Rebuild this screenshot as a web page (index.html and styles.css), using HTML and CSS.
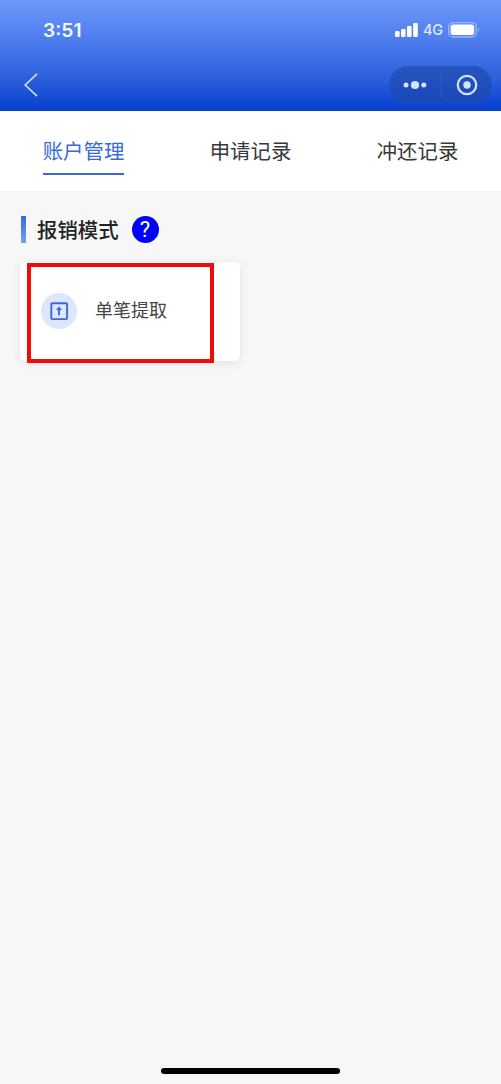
FILE: index.html
```
<!DOCTYPE html>
<html lang="zh-CN">
<head>
<meta charset="utf-8">
<title>账户管理</title>
<link rel="stylesheet" href="styles.css">
</head>
<body>
<div class="screen">
  <header class="header">
    <div class="status">
      <span class="time">3:51</span>
      <div class="indicators">
        <svg class="signal" width="23" height="14" viewBox="0 0 23 14" fill="#fff"><rect y="8" width="4.6" height="6" rx="1.2"/><rect x="6" y="6" width="4.6" height="8" rx="1.2"/><rect x="12" y="3" width="4.6" height="11" rx="1.2"/><rect x="18.2" width="4.6" height="14" rx="1.2"/></svg>
        <span class="network">4G</span>
        <svg width="33" height="16" viewBox="0 0 33 16"><rect x=".7" y=".7" width="27.6" height="14.2" rx="4.2" fill="none" stroke="#a9c4fb" stroke-width="1.1"/><rect x="2.6" y="2.6" width="23.6" height="10.4" rx="2.6" fill="#fff"/><path d="M30 5.6q1.8 2.2 0 4.4z" fill="#a9c4fb"/></svg>
      </div>
    </div>
    <nav class="navbar">
      <svg width="14" height="24" viewBox="0 0 14 24" fill="none" stroke="#c9e0ff" stroke-width="1.7"><path d="M13 .8 1.2 12 13 23.2"/></svg>
      <div class="capsule">
        <svg width="24" height="10" viewBox="0 0 24 10" fill="#d3e5fc"><circle cx="3" cy="5" r="2.5"/><circle cx="12" cy="5" r="4.1"/><circle cx="20.8" cy="5" r="2.5"/></svg>
        <span class="divider"></span>
        <svg width="22" height="22" viewBox="0 0 22 22"><circle cx="11" cy="11" r="9.2" fill="none" stroke="#cfe4fd" stroke-width="2.3"/><circle cx="11" cy="11" r="3.7" fill="#cfe4fd"/></svg>
      </div>
    </nav>
  </header>
  <div class="tabs">
    <div class="tab active"><span>账户管理</span></div>
    <div class="tab"><span>申请记录</span></div>
    <div class="tab"><span>冲还记录</span></div>
  </div>
  <main class="content">
    <div class="heading">
      <span class="marker"></span>
      <h1 class="title">报销模式</h1>
      <span class="help">?</span>
    </div>
    <div class="card">
      <svg width="36" height="36" viewBox="0 0 36 36"><circle cx="18" cy="18" r="18" fill="#dce6fd"/><rect x="10.3" y="10.3" width="15.8" height="15.8" rx="1" fill="none" stroke="#3f68d6" stroke-width="1.9"/><path d="M18 22.2V15" fill="none" stroke="#3f68d6" stroke-width="1.9"/><path d="m15 17 3-3.4 3 3.4z" fill="#3f68d6"/></svg>
      <span class="label">单笔提取</span>
      <span class="highlight"></span>
    </div>
  </main>
  <div class="home"></div>
</div>
</body>
</html>
```
FILE: styles.css
```
* { box-sizing: border-box; }
body { margin: 0; font-family: "Noto Sans CJK SC", sans-serif; }
svg { display: block; flex: none; }
.screen {
  width: 501px;
  height: 1084px;
  display: flex;
  flex-direction: column;
  background: #f7f7f7;
}
.header {
  height: 111px;
  background: linear-gradient(#6f98fb 0, #4c7bed 38%, #2e60dc 70%, #063fd0 100%);
}
.status {
  height: 60px;
  padding: 0 20px 0 43px;
  display: flex;
  align-items: center;
  justify-content: space-between;
}
.time {
  font: 600 19.2px/24px Inter, sans-serif;
  color: #f4fbff;
}
.indicators { display: flex; align-items: center; }
.network {
  width: 20px;
  margin: 0 5px 0 5px;
  font: 500 14.5px/18px Inter, sans-serif;
  letter-spacing: -0.2px;
  color: #dfedff;
}
.navbar {
  height: 49px;
  padding: 0 9px 0 24px;
  display: flex;
  align-items: center;
  justify-content: space-between;
}
.capsule {
  width: 103px;
  height: 38px;
  padding: 0 14px;
  display: flex;
  align-items: center;
  justify-content: space-between;
  border-radius: 19px;
  background: rgba(28, 72, 168, .6);
}
.divider { width: 1px; height: 25px; background: #315bbd; }
.tabs {
  height: 80px;
  display: grid;
  grid-template-columns: repeat(3, 1fr);
  background: #fff;
}
.tab {
  display: flex;
  justify-content: center;
  align-items: flex-start;
  font-size: 20.4px;
  line-height: 30px;
  color: #383838;
}
.tab span { height: 64px; padding-top: 24px; }
.tab.active { color: #3b6ad8; }
.tab.active span {
  background: linear-gradient(#3b69cf, #3b69cf) bottom / 100% 2.4px no-repeat;
}
.content { flex: 1; padding: 25px 20px 0; }
.heading { height: 27px; display: flex; align-items: center; }
.marker {
  width: 5px;
  height: 27px;
  margin-left: 1px;
  background: linear-gradient(#3768db, #799dfa);
}
.title {
  margin: 0 13px 0 11px;
  font-size: 20.4px;
  line-height: 27px;
  font-weight: 500;
  color: #222;
}
.help {
  width: 27px;
  height: 27px;
  border-radius: 50%;
  background: #0000fe;
  color: #fff;
  font: 400 22px/28px Roboto, sans-serif;
  text-align: center;
}
.card {
  position: relative;
  width: 220px;
  height: 99px;
  margin-top: 19px;
  padding: 0 21px 2px;
  display: flex;
  align-items: center;
  gap: 18px;
  border-radius: 5px;
  background: #fff;
  box-shadow: 0 2px 8px rgba(70, 85, 140, .12);
}
.label { padding-bottom: 3px; font-size: 18px; line-height: 26px; color: #454545; }
.highlight {
  position: absolute;
  left: 7px;
  top: 1px;
  width: 187px;
  height: 100px;
  border: 4px solid #f00a08;
}
.home {
  width: 179px;
  height: 6px;
  margin: 0 auto 10px;
  border-radius: 3px;
  background: #000;
}
```
